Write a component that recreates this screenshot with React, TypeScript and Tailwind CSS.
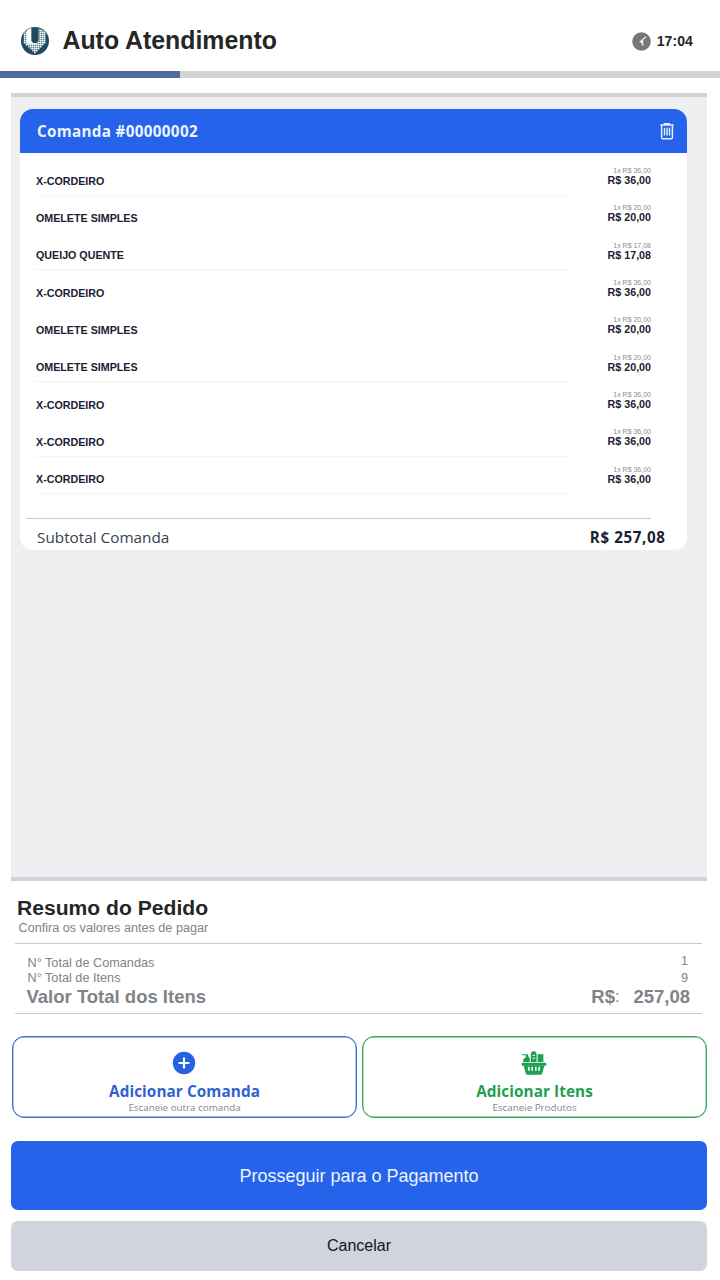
import React from 'react';

type Item = { name: string; price: string; line: string };

const items: Item[] = [
  { name: 'X-CORDEIRO', price: '36,00', line: 'border-[#f3f4f5]' },
  { name: 'OMELETE SIMPLES', price: '20,00', line: 'border-[#fdfdfe]' },
  { name: 'QUEIJO QUENTE', price: '17,08', line: 'border-[#eff0f2]' },
  { name: 'X-CORDEIRO', price: '36,00', line: 'border-[#fefefe]' },
  { name: 'OMELETE SIMPLES', price: '20,00', line: 'border-[#fdfdfe]' },
  { name: 'OMELETE SIMPLES', price: '20,00', line: 'border-[#eff0f2]' },
  { name: 'X-CORDEIRO', price: '36,00', line: 'border-[#fefefe]' },
  { name: 'X-CORDEIRO', price: '36,00', line: 'border-[#f3f4f5]' },
  { name: 'X-CORDEIRO', price: '36,00', line: 'border-[#f4f5f6]' },
];

const Logo: React.FC = () => (
  <svg width="28" height="28" viewBox="0 0 84 84" className="shrink-0">
    <defs>
      <pattern id="grid" width="6" height="6" patternUnits="userSpaceOnUse">
        <path d="M0 0H6M0 0V6" stroke="#1d4b5e" strokeWidth="2.2" />
      </pattern>
      <clipPath id="disc">
        <circle cx="42" cy="42" r="40.5" />
      </clipPath>
    </defs>
    <circle cx="42" cy="42" r="42" fill="#1d4b5e" />
    <g clipPath="url(#disc)">
      <path d="M8 10L31 0V42L37 48H47L53 42V4L74 14V50H68V56H62V62H56V68H50V74H45V79H39V74H34V68H28V62H22V56H14V50H8Z" fill="#fff" />
      <path d="M53 0H76V80H8V50H37H47L53 42ZM6 0H18V50H6Z" fill="url(#grid)" />
    </g>
  </svg>
);

const ClockIcon: React.FC = () => (
  <svg width="19" height="19" viewBox="0 0 19 19" className="shrink-0">
    <circle cx="9.5" cy="9.5" r="9.3" fill="#777" />
    <path d="M14 4.8L8.8 9.3L11.4 13.6" fill="none" stroke="#f1f1f1" strokeWidth="1.2" />
    <path d="M7.2 9.4L11.2 7.4V11.4Z" fill="#f1f1f1" />
  </svg>
);

const TrashIcon: React.FC = () => (
  <svg width="14" height="17" viewBox="0 0 14 17" fill="none" stroke="#e6efff" strokeWidth="1.5">
    <path d="M0.3 1.9H13.7M4.5 1.6V0.8H9.5V1.6" />
    <path d="M1.6 2V14.4Q1.6 15.7 2.9 15.7H11.1Q12.4 15.7 12.4 14.4V2" />
    <path d="M4.5 4.8V12.6M7 4.8V12.6M9.5 4.8V12.6" strokeWidth="1.4" />
  </svg>
);

const PlusIcon: React.FC = () => (
  <svg width="24" height="24" viewBox="0 0 24 24" className="-ml-px shrink-0">
    <circle cx="12" cy="12" r="11.2" fill="#2662e0" />
    <path d="M12 7.4V16.6M7.4 12H16.6" stroke="#fff" strokeWidth="2.2" strokeLinecap="round" />
  </svg>
);

const BasketIcon: React.FC = () => (
  <svg width="26" height="24" viewBox="0 0 26 24" fill="#1fa04f" className="-ml-px shrink-0">
    {/* products */}
    <path d="M0.8 3.2H6.8L7.4 5.4L8.8 7.4V11H2.2V8.6L4.8 6V4.2H0.8Z" />
    <path d="M9.8 11V2.8Q10 0.2 12.7 0Q15.6 0.6 15.6 3.4V11Z" />
    <path d="M16.6 3.2H22.4V11H16.6Z" />
    <path d="M11.4 4.4H14.2M11.4 7.2H14.2" stroke="#fff" strokeWidth="0.9" />
    {/* basket */}
    <rect x="0.6" y="11.8" width="24.8" height="3" rx="1.2" />
    <path d="M2.6 14.6H23.4L21.2 22.6Q20.9 23.8 19.8 23.8H6.2Q5.1 23.8 4.8 22.6Z" />
    <path d="M7.6 15.9L8.1 19.8M11.2 15.9V19.8M14.8 15.9V19.8M18.4 15.9L17.9 19.8" stroke="#fff" strokeWidth="1.6" />
  </svg>
);

const Header: React.FC = () => (
  <header>
    <div className="flex h-[71px] items-center pt-[11px] pr-[27px] pl-[20.5px]">
      <Logo />
      <h1 className="ml-[14px] text-[24.85px] leading-none font-bold text-[#262626]">Auto Atendimento</h1>
      <div className="ml-auto flex items-center gap-[6px]">
        <ClockIcon />
        <span className="text-[14px] leading-none font-bold tracking-[0.1px] text-[#262626]">17:04</span>
      </div>
    </div>
    <div className="h-[7px] bg-[#d3d3d3]">
      <div className="h-full w-[180px] bg-[#4f6c9b]" />
    </div>
  </header>
);

const OrderCard: React.FC = () => (
  <section className="h-[441px] w-[667px] overflow-hidden rounded-[13px] bg-white">
    <div className="flex h-[44px] items-center justify-between bg-[#2563eb] pr-[13px] pl-[17px]">
      <h2 className="font-['Open_Sans',sans-serif] text-[15.2px] leading-[20px] font-bold tracking-[0.34px] text-[#eef4ff]">
        Comanda #00000002
      </h2>
      <TrashIcon />
    </div>

    <ul className="pt-[5.4px] pr-9 pl-4">
      {items.map((item, i) => (
        <li key={i} className="flex h-[37.33px] justify-between text-[#1b2033]">
          <div className={`h-full w-[532px] border-b ${item.line}`}>
            <p className="pt-[16.2px] text-[10.7px] leading-[12px] font-bold">{item.name}</p>
          </div>
          <div className="pt-[8.6px] text-right">
            <p className="text-[7px] leading-[7px] text-[#8a8d96]">1x R$ {item.price}</p>
            <p className="text-[10.7px] leading-[12px] font-bold">R$ {item.price}</p>
          </div>
        </li>
      ))}
    </ul>

    <div className="mt-[23.6px] mr-9 ml-[6px] border-t border-[#c9cacc]" />
    <div className="flex items-center justify-between pt-[8px] pr-[22px] pl-[17px] font-['Open_Sans',sans-serif] leading-[20px]">
      <span className="text-[15.3px] text-[#39404c]">Subtotal Comanda</span>
      <span className="-mr-[0.6px] text-[15.2px] font-bold tracking-[0.6px] text-[#1b2033]">R$ 257,08</span>
    </div>
  </section>
);

const Summary: React.FC = () => (
  <section className="mr-[18px] ml-[15px] text-[#808488]">
    <h2 className="pt-[15px] pl-[2px] text-[21.1px] leading-[24px] font-bold text-[#262626]">Resumo do Pedido</h2>
    <p className="pt-px pl-[3.5px] text-[12.65px] leading-[14px]">Confira os valores antes de pagar</p>
    <div className="mt-[8px] h-[71px] border-y border-[#c9cacc] pt-[10px] pr-3 pl-[11.5px]">
      <div className="flex h-[17px] justify-between text-[12.7px] leading-[15px]">
        <span className="pt-[2px] pl-px">N° Total de Comandas</span>
        <span className="pr-[2px]">1</span>
      </div>
      <div className="flex h-[15px] justify-between text-[12.7px] leading-[15px]">
        <span className="pl-px">N° Total de Itens</span>
        <span className="pr-[2px]">9</span>
      </div>
      <div className="flex text-[18.5px] leading-[22px] font-bold">
        <span>Valor Total dos Itens</span>
        <span className="ml-auto">R$</span>
        <span className="text-[16px] font-normal">:</span>
        <span className="ml-[14px]">257,08</span>
      </div>
    </div>
  </section>
);

type ActionProps = { icon: React.ReactNode; title: string; hint: string; className: string };

const ActionButton: React.FC<ActionProps> = ({ icon, title, hint, className }) => (
  <button
    className={`flex h-[82px] flex-1 flex-col items-center rounded-[12px] border bg-white pt-[14px] font-['Open_Sans',sans-serif] ring-[0.4px] ring-inset ${className}`}
  >
    {icon}
    <span className="mt-[7px] text-[15.3px] leading-[19px] font-bold tracking-[0.08px]">{title}</span>
    <span className="mt-px text-[9.8px] leading-[12px] text-[#85888c]">{hint}</span>
  </button>
);

const App: React.FC = () => {
  return (
    <div className="h-[1280px] w-[720px] overflow-hidden bg-white font-['Liberation_Sans',Arial,sans-serif]">
      <Header />

      <main className="mt-[15px] mr-[13px] ml-[11px] h-[788px] border-y-4 border-[#d1d2d7] bg-[#edeff1] pt-[12px] pl-[9px]">
        <OrderCard />
      </main>

      <Summary />

      <div className="mt-[22px] mr-[13px] ml-[12px] flex gap-[5px]">
        <ActionButton
          icon={<PlusIcon />}
          title="Adicionar Comanda"
          hint="Escaneie outra comanda"
          className="border-[#3f6fd0] text-[#2f62cf] ring-[#3f6fd0]"
        />
        <ActionButton
          icon={<BasketIcon />}
          title="Adicionar Itens"
          hint="Escaneie Produtos"
          className="border-[#3fa565] text-[#1fa04f] ring-[#3fa565]"
        />
      </div>

      <div className="mt-[23px] mr-[13px] ml-[11px] flex flex-col gap-[11px]">
        <button className="h-[69px] rounded-[7px] bg-[#2563eb] pt-px text-[18px] text-[#eef4ff]">
          Prosseguir para o Pagamento
        </button>
        <button className="h-[50px] rounded-[7px] bg-[#d1d4dc] text-[16px] text-[#12151c]">Cancelar</button>
      </div>
    </div>
  );
};

export default App;
